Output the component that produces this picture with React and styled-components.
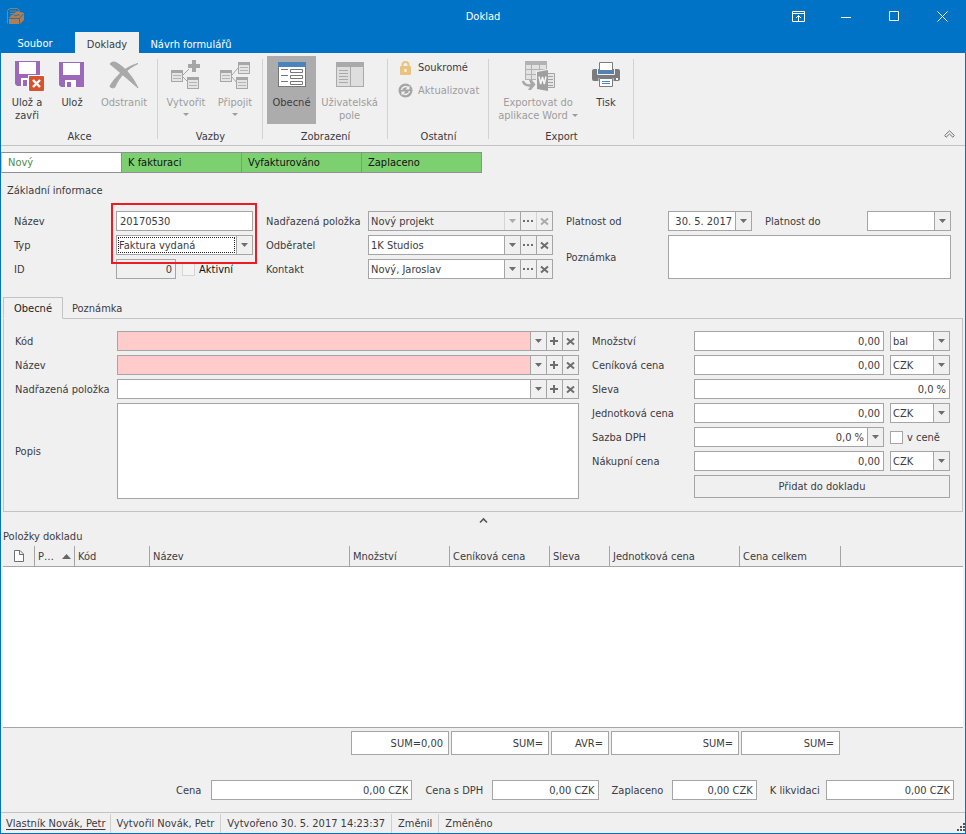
import React from 'react';
import styled, { createGlobalStyle, css } from 'styled-components';

const BLUE = '#0173c7';
const SURFACE = '#f0f0f0';
const LINE = '#a5a5a5';
const SOFT_LINE = '#c3c3c3';
const TEXT = '#3b3b42';
const MUTED = '#9d9d9d';

const GlobalStyle = createGlobalStyle`
  *, *::before, *::after { box-sizing: border-box; }
  body { margin: 0; background: ${SURFACE}; }
  body, button, input, select, textarea {
    font-family: "DejaVu Sans Condensed", Tahoma, sans-serif;
    font-size: 11px;
    line-height: 13px;
    color: ${TEXT};
  }
  button { padding: 0; border: 0; background: none; cursor: default; }
  svg { display: block; flex: none; }
`;

/* ---------- window frame ---------- */

const Window = styled.div`
  display: flex;
  flex-direction: column;
  min-height: 100vh;
  border: 1px solid ${BLUE};
  border-top: 0;
  background: ${SURFACE};
`;

const TitleBar = styled.header`
  display: grid;
  grid-template-columns: 1fr auto 1fr;
  align-items: center;
  height: 32px;
  background: ${BLUE};
  color: #fff;
`;

const Logo = styled.span`
  padding-left: 5px;
`;

const WindowTitle = styled.h1`
  margin: 0;
  font-size: 11px;
  font-weight: normal;
`;

const WindowButtons = styled.div`
  display: flex;
  justify-content: flex-end;
  margin-right: -1px;
`;

const WindowButton = styled.button`
  display: grid;
  place-items: center;
  width: 48px;
  height: 32px;
`;

const RibbonTabs = styled.nav`
  display: flex;
  align-items: stretch;
  height: 21px;
  background: ${BLUE};
`;

const RibbonTab = styled.button`
  width: ${(p) => p.$width}px;
  padding-top: 3px;
  color: ${(p) => (p.$active ? TEXT : '#fff')};
  background: ${(p) => (p.$active ? SURFACE : 'transparent')};
`;

const FileTab = styled(RibbonTab)`
  margin-right: 6px;
  padding-top: 1px;
`;

/* ---------- ribbon ---------- */

const Ribbon = styled.div`
  display: flex;
  height: 93px;
  border-bottom: 1px solid ${SOFT_LINE};
`;

const RibbonGroup = styled.section`
  display: flex;
  flex-direction: column;
  justify-content: space-between;
  width: ${(p) => p.$width}px;
  padding-top: 3px;
  background: linear-gradient(#d2d2d2, #d2d2d2) right 0 top 6px / 1px 80px no-repeat;
`;

const GroupBody = styled.div`
  display: flex;
  padding-left: ${(p) => p.$inset || 4}px;
`;

const GroupTitle = styled.h2`
  margin: 0 0 2px;
  font-size: 11px;
  font-weight: normal;
  text-align: center;
`;

const BigButton = styled.button`
  display: flex;
  flex-direction: column;
  align-items: center;
  gap: 5px;
  width: ${(p) => p.$width}px;
  height: 68px;
  padding-top: 3px;
  background: ${(p) => (p.$active ? '#acacac' : 'transparent')};
  &:disabled { color: ${MUTED}; }
`;

const DropMark = styled.span`
  display: ${(p) => (p.$inline ? 'inline-block' : 'block')};
  width: 5px;
  margin: ${(p) => (p.$inline ? '0 0 2px 4px' : '4px auto 0')};
  border: solid transparent;
  border-width: 3px 3px 0;
  border-top-color: ${MUTED};
`;

const SmallButtons = styled.div`
  display: flex;
  flex-direction: column;
  padding: 0 0 0 10px;
`;

const SmallButton = styled.button`
  display: flex;
  align-items: center;
  gap: 5px;
  height: 23px;
  &:disabled { color: ${MUTED}; }
`;

const CollapseRibbon = styled.button`
  align-self: flex-end;
  margin: 0 10px 6px auto;
`;

/* ---------- workflow steps ---------- */

const Steps = styled.ol`
  display: flex;
  margin: 6px 0 0;
  padding: 0;
  list-style: none;
`;

const Step = styled.li`
  width: 120px;
  height: 21px;
  padding: 3px 6px;
  border: 1px solid #8f8f96;
  border-left-width: ${(p) => (p.$current ? '1px' : '0')};
  color: ${(p) => (p.$current ? '#4c8c4c' : '#111')};
  background: ${(p) => (p.$current ? '#fff' : '#7dd070')};
  &:first-child { width: 121px; border-left-color: #c9c9c9; }
`;

/* ---------- form pieces ---------- */

const SectionTitle = styled.h2`
  margin: ${(p) => (p.$spaced ? '11px 6px 0' : '0 2px')};
  font-size: 11px;
  line-height: 13px;
  font-weight: normal;
`;

const HeaderForm = styled.div`
  display: grid;
  grid-template-columns: minmax(0, 239fr) minmax(0, 287fr) minmax(0, 385fr);
  gap: 13px;
  align-items: start;
  padding: 14px 14px 0 13px;
`;

const Panel = styled.div`
  display: grid;
  grid-template-columns: minmax(0, 564fr) minmax(0, 358fr);
  gap: 13px;
  margin: -1px 2px 0;
  padding: 12px 12px 12px 11px;
  border: 1px solid ${SOFT_LINE};
  align-items: start;
`;

const Fields = styled.div`
  display: grid;
  grid-template-columns: 102px minmax(0, 1fr);
  row-gap: 4px;
  align-items: center;
`;

const Cell = styled.div`
  position: relative;
  display: flex;
  align-items: center;
  gap: 6px;
  min-width: 0;
`;

const DateRow = styled.div`
  display: grid;
  grid-template-columns: minmax(0, 1fr) 115px minmax(0, 1fr);
  align-items: center;
  & > label { padding-left: 13px; }
`;

const box = css`
  border: 1px solid ${LINE};
  border-radius: 0;
  background: #fff;
  outline: 0;
`;

const Input = styled.input`
  ${box}
  display: block;
  flex: ${(p) => (p.$width ? 'none' : '1')};
  width: ${(p) => (p.$width ? `${p.$width}px` : '100%')};
  min-width: 0;
  height: 20px;
  padding: 0 3px;
  text-align: ${(p) => (p.$right ? 'right' : 'left')};
  &:disabled { background: ${SURFACE}; color: ${TEXT}; }
`;

const TextArea = styled.textarea`
  ${box}
  display: block;
  width: 100%;
  height: ${(p) => p.$height}px;
  padding: 3px;
  resize: none;
`;

const ComboBox = styled.div`
  ${box}
  display: flex;
  flex: ${(p) => (p.$width ? 'none' : '1')};
  width: ${(p) => (p.$width ? `${p.$width}px` : 'auto')};
  min-width: 0;
  height: 20px;
  background: ${(p) => (p.$disabled ? SURFACE : p.$required ? '#ffcbcb' : '#fff')};
`;

const comboValue = css`
  flex: 1;
  min-width: 0;
  padding: 0 3px 0 2px;
  border: 0;
  border-radius: 0;
  outline: 0;
  background: transparent;
  text-align: ${(p) => (p.$right ? 'right' : 'left')};
  &:disabled { color: ${TEXT}; opacity: 1; }
`;

const ComboSelect = styled.select`
  ${comboValue}
  appearance: none;
  text-align-last: ${(p) => (p.$right ? 'right' : 'left')};
  ${(p) => p.$focused && css`
    margin: 1px;
    padding: 0;
    border: 1px dotted #222;
  `}
`;

const ComboInput = styled.input`
  ${comboValue}
`;

const ComboButton = styled.button`
  display: grid;
  place-items: center;
  width: 16px;
  border-left: 1px solid ${(p) => (p.$faint ? '#d4d4d4' : LINE)};
  background: ${SURFACE};
  color: ${(p) => (p.$pale ? '#ababab' : '#6e6e6e')};
`;

const Check = styled.label`
  display: flex;
  align-items: center;
  gap: 4px;
  color: ${(p) => (p.$strong ? '#111' : TEXT)};
`;

const VatCheck = styled(Check)`
  flex: none;
  width: 60px;
`;

const CheckBox = styled.input`
  ${box}
  appearance: none;
  width: 13px;
  height: 13px;
  margin: 0;
  &:disabled { background: #f4f4f4; border-color: #d6d6d6; }
`;

const Highlight = styled.span`
  position: absolute;
  z-index: 1;
  inset: -8px -4px -33px -5px;
  border: 2px solid #ed1c24;
  pointer-events: none;
`;

const PanelButton = styled.button`
  grid-column: 2;
  height: 23px;
  border: 1px solid ${LINE};
`;

/* ---------- tabs ---------- */

const Tabs = styled.div`
  display: flex;
  margin: 18px 2px 0;
`;

const Tab = styled.button`
  position: relative;
  height: 22px;
  padding: 0 ${(p) => (p.$active ? 10 : 8)}px;
  border: 1px solid ${(p) => (p.$active ? SOFT_LINE : 'transparent')};
  border-bottom-color: ${(p) => (p.$active ? SURFACE : SOFT_LINE)};
  color: ${(p) => (p.$active ? '#222' : TEXT)};
`;

const Splitter = styled.button`
  display: grid;
  place-items: center;
  width: 100%;
  height: 18px;
  padding-bottom: 2px;
`;

/* ---------- item grid ---------- */

const ItemTable = styled.table`
  width: calc(100% - 4px);
  margin: 3px 2px 0;
  border-spacing: 0;
  table-layout: fixed;
`;

const Col = styled.col`
  width: ${(p) => (p.$width ? `${p.$width}px` : 'auto')};
`;

const HeadCell = styled.th`
  height: 21px;
  padding: 0 3px;
  border-right: ${(p) => (p.$open ? '0' : `1px solid ${LINE}`)};
  border-bottom: 1px solid ${LINE};
  font-weight: normal;
  text-align: left;
  white-space: nowrap;
`;

const SortHead = styled.span`
  display: flex;
  align-items: center;
  justify-content: space-between;
`;

const IconHead = styled.span`
  display: flex;
  justify-content: center;
`;

const EmptyCell = styled.td`
  height: 161px;
  padding: 0;
  border-bottom: 1px solid ${LINE};
  background: #fff;
`;

const FootCell = styled.td`
  padding: 3px 1px 0;
`;

const Summary = styled.output`
  display: block;
  height: 24px;
  padding: 5px;
  border: 1px solid ${LINE};
  background: #fff;
  text-align: right;
`;

const Totals = styled.div`
  display: grid;
  grid-template-columns:
    35px minmax(0, 201fr) 80px minmax(0, 106fr)
    73px minmax(0, 85fr) 69px minmax(0, 128fr);
  align-items: center;
  margin: 25px 11px 12px 175px;
`;

const TotalLabel = styled.label`
  padding-left: 13px;
  white-space: nowrap;
  &:first-child { padding-left: 0; }
`;

/* ---------- status bar ---------- */

const StatusBar = styled.footer`
  display: flex;
  align-items: stretch;
  height: 21px;
  margin-top: auto;
  padding-top: 1px;
  border-top: 1px solid ${SOFT_LINE};
`;

const StatusItem = styled.span`
  padding: 3px 6px 0;
  border-right: ${(p) => (p.$last ? '0' : '1px solid #cfcfcf')};
  &:first-child { padding: 3px 4px 0 5px; }
`;

const StatusLink = styled.a`
  color: inherit;
  text-decoration: underline;
  text-underline-offset: 2px;
`;

const Grip = styled.span`
  align-self: flex-end;
  margin: 0 0 2px auto;
`;

/* ---------- drawings ---------- */

const Icon = ({ children, w = 34, h = 32 }) => (
  <svg width={w} height={h} viewBox={`0 0 ${w} ${h}`} fill="none" aria-hidden="true">{children}</svg>
);

const LogoIcon = () => (
  <Icon w={20} h={20}>
    <path d="M1.500 17.500v-13l2-2h8l1.500 1.500v2" stroke="#7f8381" />
    <path d="M4 5h6M4 7.500h4M4 10h2" stroke="#7f8381" />
    <path d="M3 12l3.500-3.500L11 5l7 2v7l-4 4H3z" fill="#b07e52" />
    <path d="M3 12.500h10.500l4-4.500M13.500 12.500V18M7.500 8.500l2.500 1.500 2-1.500 1.500 1" stroke="#2f709f" />
  </Icon>
);

const ArrowIcon = () => <Icon w={7} h={4}><path d="M0 0h7L3.500 4z" fill="currentColor" /></Icon>;
const DotsIcon = () => <Icon w={11} h={3}><path d="M0 0h2v2H0zM4 0h2v2H4zM8 0h2v2H8z" fill="currentColor" /></Icon>;
const CrossIcon = () => <Icon w={9} h={9}><path d="M1 1.500l7 6M8 1.500l-7 6" stroke="currentColor" strokeWidth="2" /></Icon>;
const PlusIcon = () => <Icon w={9} h={8}><path d="M3 0h2v3h3v2H5v3H3V5H0V3h3z" fill="currentColor" /></Icon>;

const SaveCloseIcon = () => (
  <Icon>
    <path d="M5 2h25v25H7l-2-2z" fill="#9b68ba" />
    <path d="M9 3h17v12H9z" fill="#fff" />
    <path d="M11 19h11v8H11z" fill="#fff" />
    <path d="M13 21h4v6h-4z" fill="#9b68ba" />
    <rect x="18" y="16" width="17" height="17" fill="#fff" />
    <rect x="19" y="17" width="15" height="15" rx="1" fill="#d6532f" />
    <path d="M23 21l7 7M30 21l-7 7" stroke="#fff" strokeWidth="2.400" />
  </Icon>
);

const SaveIcon = () => (
  <Icon>
    <path d="M4 3h25v25H6l-2-2z" fill="#9b68ba" />
    <path d="M8 4h17v12H8z" fill="#fff" />
    <path d="M10 21h11v7H10z" fill="#fff" />
    <path d="M12 23h4v5h-4z" fill="#9b68ba" />
  </Icon>
);

const DeleteIcon = () => (
  <Icon>
    <path d="M3 5c1-2 4-2.500 6-1.500C17 8 25 16 31 29 23 22 14 14 3 5z" fill="#a9a9a9" stroke="#a9a9a9" />
    <path d="M31 4.500C20 10 12 18 8 28c-1 1.500-5 1-5-1C9 17 18 8 31 4.500z" fill="#a9a9a9" stroke="#a9a9a9" />
  </Icon>
);

const Card = ({ x, y }) => (
  <g>
    <rect x={x + 0.5} y={y + 0.5} width="11" height="11" fill="#e4e4e4" stroke="#a6a6a6" />
    <path d={`M${x} ${y + 1.5}h12`} stroke="#a6a6a6" strokeWidth="3" />
    <path d={`M${x + 2} ${y + 5.5}h8M${x + 2} ${y + 8.5}h8`} stroke="#b5b5b5" />
  </g>
);

const CreateIcon = () => (
  <Icon>
    <path d="M14 16l6-6M14 18l5 5" stroke="#a6a6a6" />
    <path d="M23 1h4v4h4v4h-4v4h-4V9h-4V5h4z" fill="#a6a6a6" />
    <Card x={2} y={11} />
    <Card x={18} y={18} />
  </Icon>
);

const AttachIcon = () => (
  <Icon>
    <path d="M14 16l6-7M14 18l5 6" stroke="#a6a6a6" />
    <Card x={2} y={11} />
    <Card x={20} y={3} />
    <Card x={18} y={18} />
  </Icon>
);

const FormIcon = () => (
  <Icon>
    <rect x="3.500" y="3.500" width="27" height="24" fill="#fff" stroke="#777" />
    <path d="M3 3h28v5H3z" fill="#4b84bd" />
    <path d="M6 10.500h7M6 16.500h7M6 22.500h7" stroke="#777" />
    <path d="M15.500 10.500h12v3h-12zM15.500 16.500h12v3h-12zM15.500 22.500h12v3h-12z" stroke="#777" />
  </Icon>
);

const UserFieldsIcon = () => (
  <Icon>
    <rect x="3.500" y="3.500" width="27" height="24" fill="#dedede" stroke="#aaa" />
    <path d="M3 3h28v5H3z" fill="#aaa" />
    <path d="M17.500 8v19M6 11.500h9M6 14.500h9M6 17.500h9M6 20.500h9M6 23.500h9" stroke="#aaa" />
  </Icon>
);

const WordIcon = () => (
  <Icon>
    <rect x="4.500" y="2.500" width="21" height="18" fill="#e2e2e2" stroke="#b2b2b2" />
    <path d="M4 2h22v4H4z" fill="#b2b2b2" />
    <path d="M4 10.500h22M4 15.500h22M10.500 6v15M18.500 6v15" stroke="#b2b2b2" />
    <path d="M15 12l11-2v3h9v18h-9v2l-11-2v-3H9V21h6z" fill={SURFACE} />
    <path d="M25.500 14.500h8v14h-8z" fill="#e6e6e6" stroke="#a3a3a3" />
    <path d="M26 17.500h6M26 20.500h6M26 23.500h6M26 26.500h6" stroke="#a3a3a3" />
    <path d="M16 13l11-2v21l-11-2z" fill="#9f9f9f" />
    <path d="M18 17.500l1.700 7.500 1.800-7 1.800 7 1.700-7.500" stroke="#f4f4f4" strokeWidth="1.500" />
    <path d="M2 22c1 4 5 5 10 4" stroke="#a8a8a8" strokeWidth="2.500" />
    <path d="M8 21h3l3.500 4.500L10 31H7l3-5z" fill="#a8a8a8" />
  </Icon>
);

const PrintIcon = () => (
  <Icon>
    <path d="M5 10h24q2 0 2 2v8q0 2-2 2H5q-2 0-2-2v-8q0-2 2-2z" fill="#7b7b7b" />
    <path d="M8.500 9.500h17v6h-17z" fill="#4b84bd" stroke={SURFACE} />
    <path d="M10.500 3.500h13v8h-13z" fill="#fff" stroke="#7b7b7b" />
    <path d="M9.500 19v9h15v-9z" fill={SURFACE} />
    <path d="M10.500 19.500h13v8h-13z" fill="#fff" stroke="#7b7b7b" />
    <path d="M13 22.500h8M13 24.500h8" stroke="#4b84bd" />
    <path d="M27 19h2v2h-2z" fill="#fff" />
  </Icon>
);

const LockIcon = () => (
  <Icon w={15} h={16}>
    <path d="M4.500 7V5a3 3 0 016 0v2" stroke="#ebc380" strokeWidth="2" />
    <rect x="2" y="6" width="11" height="9" rx="1" fill="#ebc380" />
    <path d="M6.500 9h2v3h-2z" fill="#fff" />
  </Icon>
);

const RefreshIcon = () => (
  <Icon w={15} h={15}>
    <circle cx="7.500" cy="7.500" r="7" fill="#a5a5a5" />
    <path d="M3.500 7a4 4 0 017-2M11.500 8a4 4 0 01-7 2" stroke="#f0f0f0" strokeWidth="1.500" />
    <path d="M11.500 2.500v4h-4zM3.500 12.500v-4h4z" fill="#f0f0f0" />
  </Icon>
);

const RibbonModeIcon = () => (
  <Icon w={13} h={11}><path d="M.5.500h12v10H.5zM0 2.500h13M6.500 10V4.500M4 7l2.500-2.500L9 7" stroke="#fff" /></Icon>
);
const MinimizeIcon = () => <Icon w={10} h={3}><path d="M0 2.500h10" stroke="#fff" /></Icon>;
const MaximizeIcon = () => <Icon w={10} h={10}><path d="M.5.500h9v9h-9z" stroke="#fff" /></Icon>;
const CloseIcon = () => <Icon w={11} h={11}><path d="M.5.500l10 10M10.500.500l-10 10" stroke="#fff" /></Icon>;
const CollapseIcon = () => (
  <Icon w={11} h={9}><path d="M.7 5.500l4.800-4.700 4.800 4.700-1.500 1.700-3.300-3.200-3.300 3.200z" stroke="#6f6f6f" /></Icon>
);
const ChevronIcon = () => <Icon w={9} h={7}><path d="M1 5.500L4.500 2 8 5.500" stroke="#555" strokeWidth="1.600" /></Icon>;
const PageIcon = () => (
  <Icon w={10} h={12}><path d="M.5.500h5.500l3.500 3.500v7.500h-9zM5.500.500v4h4" fill="#fff" stroke="#6f6f6f" /></Icon>
);
const SortIcon = () => <Icon w={9} h={5}><path d="M0 5L4.500 0 9 5z" fill="#666" /></Icon>;
const GripIcon = () => (
  <Icon w={8} h={8}>
    <path d="M6 0h2v2H6zM3 3h2v2H3zM6 3h2v2H6zM0 6h2v2H0zM3 6h2v2H3zM6 6h2v2H6z" fill="#555" />
  </Icon>
);

/* ---------- composed controls ---------- */

function Combo({ id, value = '', options = [], extra, disabled, required, focused, right, width, date, label }) {
  return (
    <ComboBox $disabled={disabled} $required={required} $width={width}>
      {date ? (
        <ComboInput id={id} defaultValue={value} $right={right} />
      ) : (
        <ComboSelect id={id} aria-label={label} defaultValue={value} disabled={disabled} $right={right} $focused={focused}>
          {[value, ...options].map((o) => <option key={o} value={o}>{o}</option>)}
        </ComboSelect>
      )}
      <ComboButton type="button" aria-label="Rozbalit" disabled={disabled} $faint={disabled} $pale={disabled}><ArrowIcon /></ComboButton>
      {extra && (
        <>
          <ComboButton type="button" aria-label={extra === 'add' ? 'Nový' : 'Vybrat'}>
            {extra === 'add' ? <PlusIcon /> : <DotsIcon />}
          </ComboButton>
          <ComboButton type="button" aria-label="Vymazat" disabled={disabled} $faint={disabled} $pale={disabled}><CrossIcon /></ComboButton>
        </>
      )}
    </ComboBox>
  );
}

function Field({ id, label, children }) {
  return (
    <>
      <label htmlFor={id}>{label}</label>
      <Cell>{children}</Cell>
    </>
  );
}

function Amount({ id, label, unit, units }) {
  return (
    <Field id={id} label={label}>
      <Input id={id} defaultValue="0,00" $right />
      <Combo label={`${label} – jednotka`} value={unit} options={units} width={60} />
    </Field>
  );
}

const CURRENCIES = ['EUR', 'USD'];

const COLUMNS = [
  { name: 'Kód', width: 75 },
  { name: 'Název', width: 200 },
  { name: 'Množství', width: 100, sum: 'SUM=0,00' },
  { name: 'Ceníková cena', width: 100, sum: 'SUM=' },
  { name: 'Sleva', width: 60, sum: 'AVR=' },
  { name: 'Jednotková cena', width: 130, sum: 'SUM=' },
  { name: 'Cena celkem', width: 101, sum: 'SUM=' },
];

const TOTALS = [
  { id: 'cena', label: 'Cena' },
  { id: 'cena-dph', label: 'Cena s DPH' },
  { id: 'zaplaceno', label: 'Zaplaceno' },
  { id: 'likvidace', label: 'K likvidaci' },
];

export default function App() {
  return (
    <Window>
      <GlobalStyle />
      <TitleBar>
        <Logo><LogoIcon /></Logo>
        <WindowTitle>Doklad</WindowTitle>
        <WindowButtons>
          <WindowButton aria-label="Zobrazení pásu karet"><RibbonModeIcon /></WindowButton>
          <WindowButton aria-label="Minimalizovat"><MinimizeIcon /></WindowButton>
          <WindowButton aria-label="Maximalizovat"><MaximizeIcon /></WindowButton>
          <WindowButton aria-label="Zavřít"><CloseIcon /></WindowButton>
        </WindowButtons>
      </TitleBar>
      <RibbonTabs>
        <FileTab $width={68}>Soubor</FileTab>
        <RibbonTab $width={64} $active>Doklady</RibbonTab>
        <RibbonTab $width={104}>Návrh formulářů</RibbonTab>
      </RibbonTabs>

      <Ribbon>
        <RibbonGroup $width={157}>
          <GroupBody>
            <BigButton $width={44}><SaveCloseIcon /><span>Ulož a<br />zavři</span></BigButton>
            <BigButton $width={46}><SaveIcon />Ulož</BigButton>
            <BigButton $width={58} disabled><DeleteIcon />Odstranit</BigButton>
          </GroupBody>
          <GroupTitle>Akce</GroupTitle>
        </RibbonGroup>
        <RibbonGroup $width={105}>
          <GroupBody>
            <BigButton $width={48} disabled><CreateIcon /><span>Vytvořit<DropMark /></span></BigButton>
            <BigButton $width={50} disabled><AttachIcon /><span>Připojit<DropMark /></span></BigButton>
          </GroupBody>
          <GroupTitle>Vazby</GroupTitle>
        </RibbonGroup>
        <RibbonGroup $width={125}>
          <GroupBody>
            <BigButton $width={49} $active><FormIcon />Obecné</BigButton>
            <BigButton $width={67} disabled><UserFieldsIcon /><span>Uživatelská<br />pole</span></BigButton>
          </GroupBody>
          <GroupTitle>Zobrazení</GroupTitle>
        </RibbonGroup>
        <RibbonGroup $width={101}>
          <SmallButtons>
            <SmallButton><LockIcon />Soukromé</SmallButton>
            <SmallButton disabled><RefreshIcon />Aktualizovat</SmallButton>
          </SmallButtons>
          <GroupTitle>Ostatní</GroupTitle>
        </RibbonGroup>
        <RibbonGroup $width={145}>
          <GroupBody $inset={6}>
            <BigButton $width={86} disabled><WordIcon /><span>Exportovat do<br />aplikace Word<DropMark $inline /></span></BigButton>
            <BigButton $width={50}><PrintIcon />Tisk</BigButton>
          </GroupBody>
          <GroupTitle>Export</GroupTitle>
        </RibbonGroup>
        <CollapseRibbon aria-label="Sbalit pás karet"><CollapseIcon /></CollapseRibbon>
      </Ribbon>

      <Steps>
        <Step $current>Nový</Step>
        <Step>K fakturaci</Step>
        <Step>Vyfakturováno</Step>
        <Step>Zaplaceno</Step>
      </Steps>

      <SectionTitle $spaced>Základní informace</SectionTitle>
      <HeaderForm>
        <Fields>
          <Field id="nazev" label="Název">
            <Input id="nazev" defaultValue="20170530" />
            <Highlight />
          </Field>
          <Field id="typ" label="Typ">
            <Combo id="typ" value="Faktura vydaná" options={['Faktura přijatá']} focused />
          </Field>
          <Field id="id" label="ID">
            <Input id="id" defaultValue="0" disabled $right $width={60} />
            <Check $strong><CheckBox type="checkbox" disabled />Aktivní</Check>
          </Field>
        </Fields>
        <Fields>
          <Field id="nadrazena" label="Nadřazená položka"><Combo id="nadrazena" value="Nový projekt" extra="pick" disabled /></Field>
          <Field id="odberatel" label="Odběratel"><Combo id="odberatel" value="1K Studios" extra="pick" /></Field>
          <Field id="kontakt" label="Kontakt"><Combo id="kontakt" value="Nový, Jaroslav" extra="pick" /></Field>
        </Fields>
        <Fields>
          <label htmlFor="platnost-od">Platnost od</label>
          <DateRow>
            <Combo id="platnost-od" value="30. 5. 2017" date right />
            <label htmlFor="platnost-do">Platnost do</label>
            <Combo id="platnost-do" date right />
          </DateRow>
          <Field id="poznamka" label="Poznámka"><TextArea id="poznamka" $height={44} /></Field>
        </Fields>
      </HeaderForm>

      <Tabs role="tablist">
        <Tab role="tab" aria-selected="true" $active>Obecné</Tab>
        <Tab role="tab" aria-selected="false">Poznámka</Tab>
      </Tabs>
      <Panel>
        <Fields>
          <Field id="p-kod" label="Kód"><Combo id="p-kod" extra="add" required /></Field>
          <Field id="p-nazev" label="Název"><Combo id="p-nazev" extra="add" required /></Field>
          <Field id="p-nadrazena" label="Nadřazená položka"><Combo id="p-nadrazena" extra="add" /></Field>
          <Field id="p-popis" label="Popis"><TextArea id="p-popis" $height={96} /></Field>
        </Fields>
        <Fields>
          <Amount id="mnozstvi" label="Množství" unit="bal" units={['ks', 'kg']} />
          <Amount id="cenikova" label="Ceníková cena" unit="CZK" units={CURRENCIES} />
          <Field id="sleva" label="Sleva"><Input id="sleva" defaultValue="0,0 %" $right /></Field>
          <Amount id="jednotkova" label="Jednotková cena" unit="CZK" units={CURRENCIES} />
          <Field id="dph" label="Sazba DPH">
            <Combo id="dph" value="0,0 %" options={['15,0 %', '21,0 %']} right />
            <VatCheck><CheckBox type="checkbox" />v ceně</VatCheck>
          </Field>
          <Amount id="nakupni" label="Nákupní cena" unit="CZK" units={CURRENCIES} />
          <PanelButton type="button">Přidat do dokladu</PanelButton>
        </Fields>
      </Panel>

      <Splitter aria-label="Sbalit panel"><ChevronIcon /></Splitter>
      <SectionTitle>Položky dokladu</SectionTitle>
      <ItemTable>
        <colgroup>
          <Col $width={32} />
          <Col $width={40} />
          {COLUMNS.map((c) => <Col key={c.name} $width={c.width} />)}
          <Col />
        </colgroup>
        <thead>
          <tr>
            <HeadCell aria-label="Dokument"><IconHead><PageIcon /></IconHead></HeadCell>
            <HeadCell><SortHead>P…<SortIcon /></SortHead></HeadCell>
            {COLUMNS.map((c) => <HeadCell key={c.name}>{c.name}</HeadCell>)}
            <HeadCell $open />
          </tr>
        </thead>
        <tbody>
          <tr><EmptyCell colSpan={10} /></tr>
        </tbody>
        <tfoot>
          <tr>
            <FootCell />
            <FootCell />
            {COLUMNS.map((c) => <FootCell key={c.name}>{c.sum && <Summary>{c.sum}</Summary>}</FootCell>)}
            <FootCell />
          </tr>
        </tfoot>
      </ItemTable>

      <Totals>
        {TOTALS.map((t) => (
          <React.Fragment key={t.id}>
            <TotalLabel htmlFor={t.id}>{t.label}</TotalLabel>
            <Input id={t.id} defaultValue="0,00 CZK" $right />
          </React.Fragment>
        ))}
      </Totals>

      <StatusBar>
        <StatusItem><StatusLink href="#vlastnik">Vlastník Novák, Petr</StatusLink></StatusItem>
        <StatusItem>Vytvořil Novák, Petr</StatusItem>
        <StatusItem>Vytvořeno 30. 5. 2017 14:23:37</StatusItem>
        <StatusItem>Změnil</StatusItem>
        <StatusItem $last>Změněno</StatusItem>
        <Grip><GripIcon /></Grip>
      </StatusBar>
    </Window>
  );
}
